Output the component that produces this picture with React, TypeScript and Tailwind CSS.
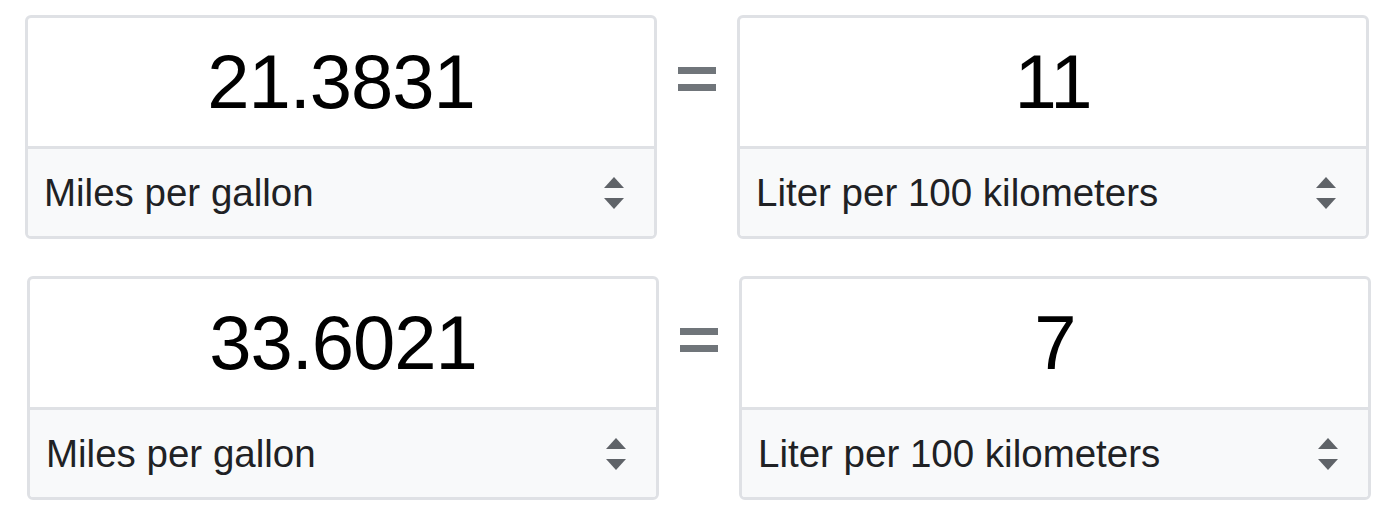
type ConverterRowProps = {
  from: string;
  to: string;
  fromUnit: string;
  toUnit: string;
  shift?: boolean;
};

function UpDownIcon() {
  return (
    <svg width="20" height="32" viewBox="0 0 20 32" className="shrink-0">
      <polygon points="0,11 10,0 20,11" fill="#5f6368" />
      <polygon points="0,21 20,21 10,32" fill="#5f6368" />
    </svg>
  );
}

function UnitBox({ value, unit }: { value: string; unit: string }) {
  return (
    <div className="w-[632px] overflow-hidden rounded-[6px] border-[3px] border-[#dfe1e5] bg-white">
      <div className="flex h-[128px] items-center justify-center text-[76px] tracking-[-1px] text-black">
        {value}
      </div>
      <div className="flex h-[90px] items-center justify-between border-t-[3px] border-[#dfe1e5] bg-[#f8f9fa] pl-[16px] pr-[30px]">
        <span className="text-[38.5px] text-[#202124]">{unit}</span>
        <UpDownIcon />
      </div>
    </div>
  );
}

function ConverterRow({ from, to, fromUnit, toUnit, shift }: ConverterRowProps) {
  return (
    <div className={shift ? "ml-[2px] flex items-start" : "flex items-start"}>
      <UnitBox value={from} unit={fromUnit} />
      <div className="mx-[21px] flex h-[131px] w-[38px] flex-col justify-center gap-[10px] pb-[3px]">
        <div className="h-[7px] w-[38px] bg-[#70757a]" />
        <div className="h-[7px] w-[38px] bg-[#70757a]" />
      </div>
      <UnitBox value={to} unit={toUnit} />
    </div>
  );
}

export default function App() {
  return (
    <div
      className="flex min-h-[518px] w-[1398px] flex-col gap-[37px] bg-white pl-[25px] pt-[15px]"
      style={{ fontFamily: '"Liberation Sans", Arial, sans-serif' }}
    >
      <ConverterRow
        from="21.3831"
        to="11"
        fromUnit="Miles per gallon"
        toUnit="Liter per 100 kilometers"
      />
      <ConverterRow
        from="33.6021"
        to="7"
        fromUnit="Miles per gallon"
        toUnit="Liter per 100 kilometers"
        shift
      />
    </div>
  );
}
